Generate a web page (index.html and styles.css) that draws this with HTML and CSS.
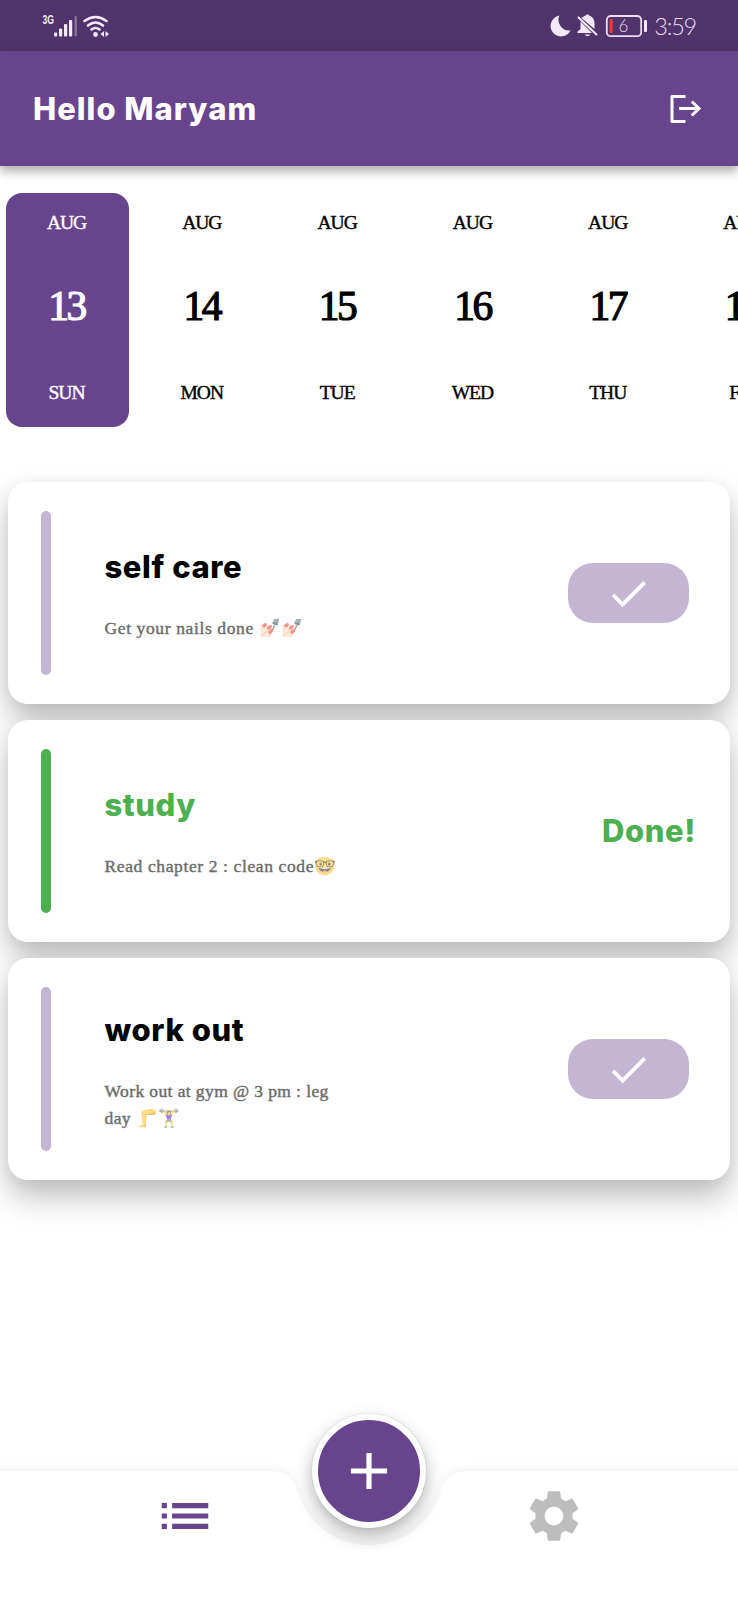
FILE: index.html
```html
<!DOCTYPE html>
<html lang="en">
<head>
<meta charset="utf-8">
<title>Tasks</title>
<link rel="stylesheet" href="styles.css">
</head>
<body>
<div class="app">
  <div class="status">
    <svg class="status-left" width="70" height="30" viewBox="0 0 70 30">
      <g fill="#f3e9f8">
        <text class="net" x="0.500" y="12" textLength="11.500" lengthAdjust="spacingAndGlyphs">3G</text>
        <rect x="12" y="20.500" width="3.200" height="4" rx="1"/>
        <rect x="17" y="16.500" width="3.200" height="8" rx="1"/>
        <rect x="22" y="12" width="3.200" height="12.500" rx="1"/>
        <rect x="27" y="8" width="3.200" height="16.500" rx="1"/>
        <rect x="32.500" y="4" width="2.400" height="20.500" rx="1" opacity=".35"/>
        <circle cx="53.500" cy="22.500" r="2.400"/>
        <path d="M62 19v6l-3.500-3zM63.500 19v6l3.500-3z"/>
      </g>
      <g fill="none" stroke="#f3e9f8" stroke-width="2.600" stroke-linecap="round">
        <path d="M42.500 9Q53.500 1 64.500 9"/>
        <path d="M46 13.500Q53.500 7.500 61 13.500"/>
        <path d="M49.500 17.500Q53.500 14.500 57.500 17.500"/>
      </g>
    </svg>
    <div class="status-right">
      <svg width="92" height="26" viewBox="0 0 92 26">
        <path fill="#f3e9f8" d="M9.500 2.500A10.500 10.500 0 1 0 20.600 17.300A10.500 10.500 0 0 1 9.500 2.500z"/>
        <path fill="#f3e9f8" d="M31.500 5C32.500 4 34 3 35.500 2.700C36 1.200 39 1.200 39.500 2.700C43 3.800 44.500 7 44.500 10.500V16zM30.500 8.500L42 20H27.500V18.800L30.500 16zM34.500 21.500H40.500Q37.500 25 34.500 21.500z"/>
        <path stroke="#f3e9f8" stroke-width="2" stroke-linecap="round" d="M28.500 4.500L46.500 21.500"/>
        <rect x="56.800" y="3" width="34.400" height="20.200" rx="4" fill="none" stroke="#eadcf1" stroke-width="1.800"/>
        <rect x="59.500" y="6" width="3.200" height="14" rx="1" fill="#f0392f"/>
        <text class="battery-level" x="68.500" y="19">6</text>
      </svg>
      <span class="battery-tip"></span>
      <span class="clock">3:59</span>
    </div>
  </div>

  <header class="bar">
    <h1 class="hello">Hello Maryam</h1>
    <svg class="logout" width="32" height="30" viewBox="0 0 32 30" fill="none" stroke="#fff" stroke-width="3">
      <path stroke-linejoin="round" d="M15.500 2.500H2V27.500H15.500"/>
      <path d="M9 14.500H29.500M21.800 7.500L29 14.500L21.800 21.500"/>
    </svg>
  </header>

  <div class="days">
    <div class="day selected"><span class="small">AUG</span><span class="num">13</span><span class="small">SUN</span></div>
    <div class="day"><span class="small">AUG</span><span class="num">14</span><span class="small">MON</span></div>
    <div class="day"><span class="small">AUG</span><span class="num">15</span><span class="small">TUE</span></div>
    <div class="day"><span class="small">AUG</span><span class="num">16</span><span class="small">WED</span></div>
    <div class="day"><span class="small">AUG</span><span class="num">17</span><span class="small">THU</span></div>
    <div class="day"><span class="small">AUG</span><span class="num">18</span><span class="small">FRI</span></div>
  </div>

  <main class="tasks">
    <article class="card">
      <div class="stripe"></div>
      <div class="body">
        <h2 class="title">self care</h2>
        <p class="desc">Get your nails done <span class="emoji">💅🏻💅🏻</span></p>
      </div>
      <button class="check"><svg width="47" height="47" viewBox="0 0 24 24"><path fill="#fff" d="M9 16.170L4.830 12l-1.420 1.410L9 19 21 7l-1.410-1.410z"/></svg></button>
    </article>
    <article class="card done">
      <div class="stripe"></div>
      <div class="body">
        <h2 class="title">study</h2>
        <p class="desc">Read chapter 2 : clean code<span class="emoji">🤓</span></p>
      </div>
      <strong class="title done-label">Done!</strong>
    </article>
    <article class="card">
      <div class="stripe"></div>
      <div class="body">
        <h2 class="title">work out</h2>
        <p class="desc desc-long">Work out at gym @ 3 pm : leg day <span class="emoji">🦵🏋️‍♀️</span></p>
      </div>
      <button class="check"><svg width="47" height="47" viewBox="0 0 24 24"><path fill="#fff" d="M9 16.170L4.830 12l-1.420 1.410L9 19 21 7l-1.410-1.410z"/></svg></button>
    </article>
  </main>

  <nav class="nav">
    <svg class="nav-shape" width="738" height="129" viewBox="0 0 738 129">
      <path fill="#fff" d="M-40 0H268C286 0 292 5 298 21A74 74 0 0 0 440 21C446 5 452 0 470 0H778V180H-40z"/>
    </svg>
    <div class="tab">
      <svg width="62" height="62" viewBox="0 0 24 24" fill="#68448d"><path d="M3 13h2v-2H3v2zm0 4h2v-2H3v2zm0-8h2V7H3v2zm4 4h14v-2H7v2zm0 4h14v-2H7v2zM7 7v2h14V7H7z"/></svg>
    </div>
    <div class="tab">
      <svg width="62" height="62" viewBox="0 0 24 24" fill="#bdbdbd"><path d="M19.140 12.940c.04-.3.060-.61.060-.94 0-.32-.02-.64-.07-.94l2.030-1.580c.18-.14.230-.41.120-.61l-1.920-3.320c-.12-.22-.37-.29-.59-.22l-2.390.96c-.5-.38-1.030-.7-1.620-.94l-.36-2.540c-.04-.24-.24-.41-.48-.41h-3.840c-.24 0-.43.17-.47.41l-.36 2.540c-.59.24-1.130.57-1.620.94l-2.390-.96c-.22-.08-.47 0-.59.22L2.740 8.870c-.12.21-.08.47.12.61l2.030 1.580c-.05.3-.09.630-.09.940s.02.640.070.940l-2.030 1.580c-.18.14-.23.410-.12.610l1.920 3.320c.12.220.370.290.590.220l2.390-.96c.5.380 1.030.7 1.620.940l.36 2.540c.05.240.240.410.480.410h3.840c.24 0 .44-.17.470-.41l.36-2.540c.59-.24 1.130-.56 1.620-.94l2.390.96c.22.080.470 0 .59-.22l1.920-3.320c.12-.22.070-.47-.12-.61l-2.010-1.580zM12 15.600c-1.980 0-3.600-1.620-3.600-3.600s1.620-3.600 3.600-3.600 3.600 1.620 3.600 3.600-1.620 3.600-3.600 3.600z"/></svg>
    </div>
    <button class="fab"><svg width="62" height="62" viewBox="0 0 24 24"><path fill="#fff" d="M19 13h-6v6h-2v-6H5v-2h6V5h2v6h6v2z"/></svg></button>
  </nav>
</div>
</body>
</html>
```
FILE: styles.css
```css
* { box-sizing: border-box; margin: 0; padding: 0; }
body { background: #fff; }
button { border: 0; font: inherit; }
svg { display: block; flex: none; }

.app {
  width: 738px;
  height: 1600px;
  display: flex;
  flex-direction: column;
  overflow: hidden;
  background: #fff;
}

.status {
  height: 51px;
  flex: none;
  display: flex;
  justify-content: space-between;
  align-items: center;
  padding: 0 42px 0 42px;
  background: #50336a;
}
.status-left { margin-top: 2px; }
.net { font: bold 12px "Liberation Sans", sans-serif; }
.battery-level { font: 300 17px Lato, sans-serif; fill: #eadcf1; }
.status-right { display: flex; align-items: center; }
.battery-tip { width: 3px; height: 12px; margin-left: 2px; border-radius: 1px; background: #f3e9f8; }
.clock {
  margin-left: 7px;
  font: 300 23.500px/30px Lato, sans-serif;
  letter-spacing: -1.200px;
  color: #eadcf1;
}

.bar {
  position: relative;
  height: 115px;
  flex: none;
  display: flex;
  justify-content: space-between;
  align-items: center;
  padding: 0 36px 0 33px;
  background: #68448d;
  box-shadow: 0 5px 10px rgba(0, 0, 0, .34);
}
.hello, .title {
  font-family: Inter, sans-serif;
  font-weight: 800;
  font-size: 31px;
  line-height: 48px;
  letter-spacing: .6px;
  white-space: nowrap;
}
.hello { color: #fff; letter-spacing: 1px; padding-top: 1px; }

.days {
  flex: none;
  display: flex;
  gap: 12.300px;
  padding: 27px 0 0 6px;
}
.day {
  flex: none;
  width: 123px;
  height: 234px;
  padding: 18px 2px 0 0;
  border-radius: 16px;
  display: flex;
  flex-direction: column;
  align-items: center;
  font-family: "Liberation Serif", serif;
  color: #000;
}
.selected { background: #68448d; color: #fff; }
.small { font-size: 19.500px; line-height: 24px; letter-spacing: -1px; -webkit-text-stroke: .4px; }
.num { margin: 46px 0 50px; font-size: 41.500px; line-height: 50px; letter-spacing: -2.500px; -webkit-text-stroke: 1.200px; }

.tasks {
  flex: none;
  display: flex;
  flex-direction: column;
  gap: 16px;
  margin-top: 55px;
  padding: 0 8px;
}
.card {
  position: relative;
  height: 222px;
  display: flex;
  align-items: center;
  padding: 0 41px 0 33px;
  border-radius: 20px;
  background: #fff;
  box-shadow: 0 17px 32px rgba(0, 0, 0, .25), 0 4px 16px rgba(0, 0, 0, .05);
}
.stripe { width: 10px; height: 164px; border-radius: 5px; background: #c4b5d2; }
.body { margin-left: 53.500px; width: 236px; margin-right: auto; padding-bottom: 1px; }
.title { color: #000; }
.desc {
  margin-top: 24px;
  font: 17.500px/27px "Liberation Serif", serif;
  letter-spacing: .62px;
  color: #6b6b6b;
  -webkit-text-stroke: .4px;
}
.desc-long { letter-spacing: .4px; }
.emoji { opacity: .55; font-size: 17.500px; letter-spacing: 0; line-height: 20px; }
.check {
  width: 121px;
  height: 60px;
  display: flex;
  align-items: center;
  justify-content: center;
  border-radius: 25px;
  background: #c4b5d2;
}
.done .stripe { background: #4caf50; }
.done .title { color: #4caf50; }
.done-label { margin-right: -7px; }

.nav {
  position: relative;
  flex: none;
  height: 129px;
  margin-top: auto;
  display: flex;
}
.nav-shape {
  position: absolute;
  inset: 0;
  overflow: visible;
  filter: drop-shadow(0 -2px 4px rgba(0, 0, 0, .06));
}
.tab { position: relative; flex: 1; display: flex; justify-content: center; padding-top: 14px; }
.fab {
  position: absolute;
  left: 312px;
  top: -57px;
  width: 114px;
  height: 114px;
  display: flex;
  align-items: center;
  justify-content: center;
  border: 6px solid #fff;
  border-radius: 50%;
  background: #68448d;
  box-shadow: 0 8px 18px rgba(0, 0, 0, .3), 0 0 2px rgba(0, 0, 0, .15);
}
```
